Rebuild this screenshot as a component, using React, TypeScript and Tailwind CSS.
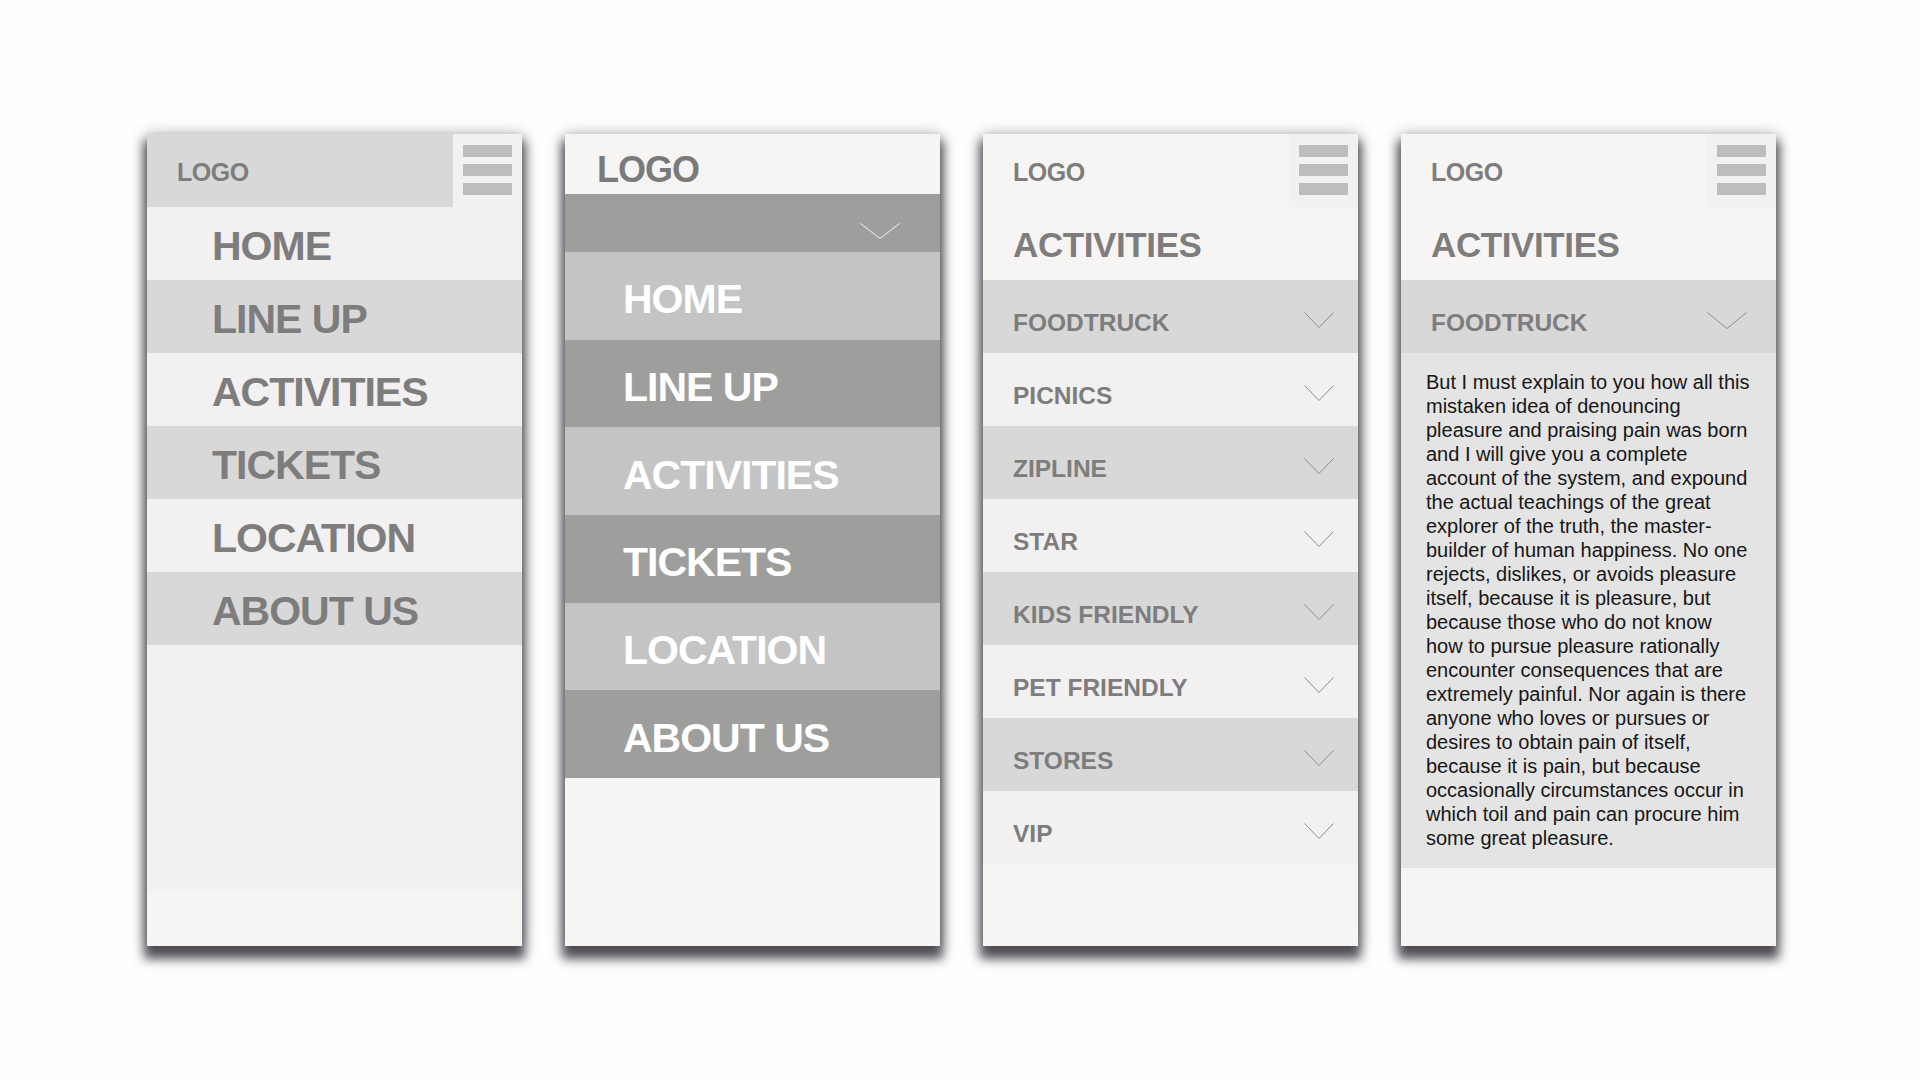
import React from 'react';

const font = "font-['Liberation_Sans',Arial,Helvetica,sans-serif]";

const mainMenu = ['HOME', 'LINE UP', 'ACTIVITIES', 'TICKETS', 'LOCATION', 'ABOUT US'];
const activities = ['FOODTRUCK', 'PICNICS', 'ZIPLINE', 'STAR', 'KIDS FRIENDLY', 'PET FRIENDLY', 'STORES', 'VIP'];

const lorem = [
    'But I must explain to you how all this',
    'mistaken idea of denouncing',
    'pleasure and praising pain was born',
    'and I will give you a complete',
    'account of the system, and expound',
    'the actual teachings of the great',
    'explorer of the truth, the master-',
    'builder of human happiness. No one',
    'rejects, dislikes, or avoids pleasure',
    'itself, because it is pleasure, but',
    'because those who do not know',
    'how to pursue pleasure rationally',
    'encounter consequences that are',
    'extremely painful. Nor again is there',
    'anyone who loves or pursues or',
    'desires to obtain pain of itself,',
    'because it is pain, but because',
    'occasionally circumstances occur in',
    'which toil and pain can procure him',
    'some great pleasure.',
];

const Phone: React.FC<{ children: React.ReactNode; bg?: string }> = ({ children, bg = 'bg-[#f7f5f4]' }) => (
    <div
        className={`flex flex-col w-[375px] h-[812px] shrink-0 overflow-hidden ${bg} shadow-[0_10px_10px_3px_rgba(45,40,50,0.8),0_0_14px_rgba(60,55,65,0.35)]`}
    >
        {children}
    </div>
);

const Burger = () => (
    <div className="flex flex-col gap-[7px] w-[69px] h-[73px] shrink-0 bg-[#f2f0f0] px-[10px] pt-[11px]">
        <div className="h-[12px] bg-[#bdbdbd]" />
        <div className="h-[12px] bg-[#bdbdbd]" />
        <div className="h-[12px] bg-[#bdbdbd]" />
    </div>
);

const Chevron: React.FC<{ w: number; h: number; color: string }> = ({ w, h, color }) => (
    <svg width={w} height={h} viewBox={`0 0 ${w} ${h}`} fill="none">
        <polyline points={`0.5,0.5 ${w / 2},${h - 0.5} ${w - 0.5},0.5`} stroke={color} strokeWidth="1" />
    </svg>
);

const Header: React.FC<{ bg: string }> = ({ bg }) => (
    <div className="flex h-[73px] shrink-0">
        <div className={`flex-1 flex items-center pl-[30px] pt-[4px] ${bg}`}>
            <span className="text-[25px] font-bold tracking-[-0.5px] text-[#7d7d7d]">LOGO</span>
        </div>
        <Burger />
    </div>
);

// screen 1: open side menu
const MenuScreen = () => (
    <Phone bg="bg-[#f2f0f0]">
        <Header bg="bg-[#d8d8d8]" />
        {mainMenu.map((item, i) => (
            <div
                key={item}
                className={`flex items-center h-[73px] shrink-0 pl-[65px] pt-[5px] ${i % 2 ? 'bg-[#d8d8d8]' : 'bg-[#f2f0f0]'}`}
            >
                <span className="text-[41px] font-bold tracking-[-1px] text-[#7d7d7d] leading-none">{item}</span>
            </div>
        ))}
        <div className="flex-1" />
        <div className="h-[56px] shrink-0 bg-[#f7f5f4]" />
    </Phone>
);

// screen 2: dropdown menu
const DropdownScreen = () => (
    <Phone>
        <div className="flex items-center h-[60px] shrink-0 pl-[32px] pt-[11px]">
            <span className="text-[36px] font-bold tracking-[-1px] text-[#7a7a7a] leading-none">LOGO</span>
        </div>
        <div className="flex items-center justify-end h-[58px] shrink-0 bg-[#9e9e9d] pr-[40px] pt-[16px]">
            <Chevron w={40} h={16} color="#f4f4f4" />
        </div>
        {mainMenu.map((item, i) => (
            <div
                key={item}
                className={`flex items-center h-[87.67px] shrink-0 pl-[58px] pt-[8px] ${i % 2 ? 'bg-[#9e9e9d]' : 'bg-[#c4c4c4]'}`}
            >
                <span className="text-[41px] font-bold tracking-[-1px] text-white leading-none">{item}</span>
            </div>
        ))}
    </Phone>
);

const AccordionRow: React.FC<{ label: string; dark: boolean; wide?: boolean }> = ({ label, dark, wide }) => (
    <div
        className={`flex items-center justify-between h-[73px] shrink-0 pl-[30px] pt-[7px] ${wide ? 'pr-[29px]' : 'pr-[24px]'} ${dark ? 'bg-[#d8d8d8]' : 'bg-[#f2f0f0]'}`}
    >
        <span className="pt-[6px] text-[24.5px] font-bold text-[#7d7d7d] leading-none">{label}</span>
        {wide ? <Chevron w={40} h={17} color="#8c8c8c" /> : <Chevron w={30} h={16} color="#8c8c8c" />}
    </div>
);

const Title = () => (
    <div className="flex items-center h-[73px] shrink-0 pl-[30px] pt-[2px]">
        <span className="text-[35px] font-bold tracking-[-0.4px] text-[#7d7d7d] leading-none">ACTIVITIES</span>
    </div>
);

// screen 3: activities list
const ActivitiesScreen = () => (
    <Phone>
        <Header bg="bg-[#f7f5f4]" />
        <Title />
        {activities.map((a, i) => (
            <AccordionRow key={a} label={a} dark={i % 2 === 0} />
        ))}
    </Phone>
);

// screen 4: one activity expanded
const DetailScreen = () => (
    <Phone>
        <Header bg="bg-[#f7f5f4]" />
        <Title />
        <AccordionRow label="FOODTRUCK" dark wide />
        <div className="shrink-0 bg-[#e4e4e4] pl-[25px] pr-[20px] pt-[17px] pb-[18px] text-[20px] leading-[24px] text-[#161616] whitespace-nowrap">
            {lorem.map((line) => (
                <div key={line}>{line}</div>
            ))}
        </div>
    </Phone>
);

export default function App() {
    return (
        <div className={`w-[1920px] h-[1080px] bg-[#fefefe] ${font} flex gap-[43px] pl-[147px] pt-[134px]`}>
            <MenuScreen />
            <DropdownScreen />
            <ActivitiesScreen />
            <DetailScreen />
        </div>
    );
}
